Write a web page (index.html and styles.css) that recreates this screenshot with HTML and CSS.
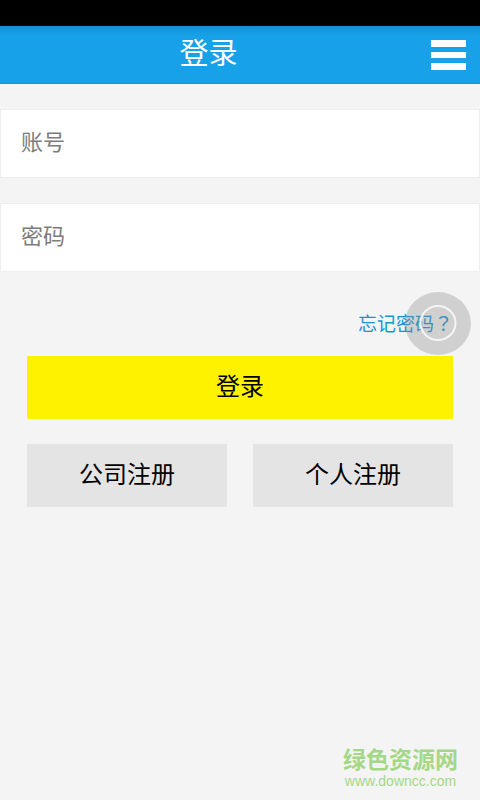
FILE: index.html
```html
<!DOCTYPE html>
<html lang="zh-CN">
<head>
<meta charset="utf-8">
<meta name="viewport" content="width=device-width, initial-scale=1">
<title>登录</title>
<link rel="stylesheet" href="styles.css">
</head>
<body>
<div class="status-bar"></div>
<header class="header">
  <h1 class="title">登录</h1>
  <button class="menu" type="button" aria-label="菜单">
    <svg width="35" height="30" viewBox="0 0 35 30" aria-hidden="true">
      <path fill="#fff" d="M0 0h35v7H0zM0 12h35v6H0zM0 23h35v7H0z"/>
    </svg>
  </button>
</header>
<main class="main">
  <form class="form">
    <input class="field" type="text" placeholder="账号" aria-label="账号">
    <input class="field" type="password" placeholder="密码" aria-label="密码">
    <div class="actions">
      <div class="forgot">
        <a class="forgot-link" href="#">忘记密码<span class="question" lang="zh-TW">？</span></a>
        <svg class="float-ball" width="66" height="64" viewBox="0 0 66 64" aria-hidden="true">
          <ellipse cx="33" cy="31.5" rx="33" ry="31.5" fill="#888" fill-opacity=".33"/>
          <ellipse cx="33" cy="31" rx="17.5" ry="17" fill="none" stroke="#f4f4f4" stroke-width="2"/>
        </svg>
      </div>
      <button class="button primary" type="submit">登录</button>
      <div class="register">
        <button class="button" type="button">公司注册</button>
        <button class="button" type="button">个人注册</button>
      </div>
    </div>
  </form>
</main>
<footer class="footer">
  <div class="mark">
    <strong class="mark-name">绿色资源网</strong>
    <span class="mark-url">www.downcc.com</span>
  </div>
</footer>
</body>
</html>
```
FILE: styles.css
```css
* {
  box-sizing: border-box;
}

body {
  margin: 0;
  min-height: 100vh;
  display: flex;
  flex-direction: column;
  background: #f4f4f4;
  font-family: "Noto Sans CJK SC", sans-serif;
  color: #000;
}

.status-bar {
  height: 26px;
  background: #000;
}

.header {
  display: flex;
  align-items: center;
  height: 58px;
  background: linear-gradient(#1591d4, #17a1e8 10px);
  border-bottom: 1px solid #1794d6;
}

.title {
  flex: 1;
  margin: 0;
  padding-bottom: 8px;
  font-size: 29px;
  line-height: 40px;
  font-weight: 400;
  text-align: center;
  color: #fff;
}

.menu {
  display: flex;
  padding: 0 14px;
  border: 0;
  background: none;
}

.main {
  flex: 1;
}

.form {
  display: flex;
  flex-direction: column;
  gap: 25px;
  padding-top: 25px;
}

.field {
  width: 100%;
  height: 69px;
  padding: 0 20px 8px;
  border: 1px solid #eee;
  border-radius: 0;
  background: #fff;
  font: inherit;
  font-size: 22px;
}

.field::placeholder {
  color: #7c7c7c;
  opacity: 1;
}

.actions {
  display: flex;
  flex-direction: column;
  gap: 25px;
  padding: 0 27px;
}

.forgot {
  position: relative;
  display: flex;
  justify-content: flex-end;
  height: 34px;
  padding-top: 16px;
}

.forgot-link {
  font-size: 19px;
  line-height: 20px;
  color: #1b93d2;
  text-decoration: none;
}

.question {
  font-family: "Noto Sans CJK TC", sans-serif;
}

.float-ball {
  position: absolute;
  top: -5px;
  right: -18px;
}

.button {
  width: 100%;
  height: 63px;
  padding: 0 0 6px;
  border: 0;
  background: #e4e4e4;
  font: inherit;
  font-size: 24px;
  color: #000;
}

.primary {
  background: #fff200;
}

.register {
  display: grid;
  grid-template-columns: 1fr 1fr;
  gap: 26px;
}

.footer {
  display: flex;
  justify-content: flex-end;
  padding: 0 22px 10px;
}

.mark {
  display: flex;
  flex-direction: column;
  align-items: center;
  color: #a5d886;
}

.mark-name {
  font-size: 23px;
  line-height: 28px;
  font-weight: 700;
}

.mark-url {
  font-family: "Liberation Sans", sans-serif;
  font-size: 14px;
  line-height: 18px;
}
```
